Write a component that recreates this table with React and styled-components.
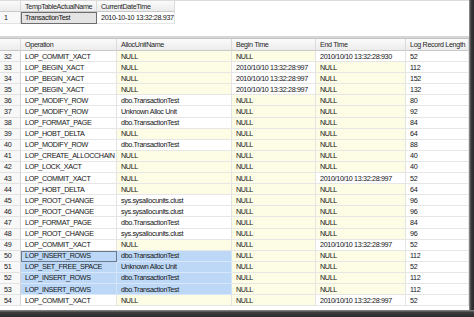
import React from "react";
import styled, { createGlobalStyle, css } from "styled-components";

const Global = createGlobalStyle`
  body {
    margin: 0;
    background: #fff;
    font-family: "Liberation Sans", Arial, sans-serif;
  }
`;

const Frame = styled.div`
  width: 474px;
  height: 317px;
  display: grid;
  grid-template-columns: 469px 5px;
  grid-template-rows: 310px 7px;
  overflow: hidden;
  background: #fff;
`;

const Content = styled.div`
  display: flex;
  flex-direction: column;
  overflow: hidden;
  background: #fff;
`;

const RightShadow = styled.div`
  background: linear-gradient(to right, #9a9a9a, #3a3a3a 40%, #2a2a2a);
`;

const BottomShadow = styled.div`
  grid-column: 1 / 3;
  background: linear-gradient(to bottom, #8c8c8c, #3c3c3c 35%, #2b2b2b);
`;

const TopPane = styled.div`
  height: 36px;
  border-top: 1px solid #dcdcdc;
  box-sizing: border-box;
`;

const Splitter = styled.div`
  height: 3px;
  background: #d6d6d6;
  border-bottom: 1px solid #c4c4c4;
  box-sizing: border-box;
`;

const Row = styled.div`
  display: grid;
  grid-template-columns: ${({ $cols }) => $cols};
  height: ${({ $h }) => $h};
`;

const cellText = css`
  font-size: 7.2px;
  letter-spacing: -0.35px;
  color: #141414;
  white-space: nowrap;
  overflow: hidden;
  box-sizing: border-box;
  display: flex;
  align-items: center;
  padding-left: 4px;
`;

const Head = styled.div`
  ${cellText}
  background: linear-gradient(#fbfbfb, #ececec);
  border-right: 1px solid #dadada;
  border-bottom: 1px solid #c9c9c9;
  color: #262626;
`;

const Num = styled.div`
  ${cellText}
  background: #f8f8f8;
  border-right: 1px solid #d4d4d4;
  border-bottom: 1px solid #e2e2e2;
`;

const Cell = styled.div`
  ${cellText}
  background: ${({ $null }) => ($null ? "#fdfce5" : "#fff")};
  border-right: 1px solid #e4e4e4;
  border-bottom: 1px solid #e6e6e6;

  ${({ $sel }) =>
    $sel &&
    css`
      background: #bcd8f6;
      border-right-color: #d2e4f8;
      border-bottom-color: #d8e8fa;
    `}

  ${({ $focus }) =>
    $focus &&
    css`
      outline: 1px solid #6a7a8c;
      outline-offset: -1px;
    `}

  ${({ $picked }) =>
    $picked &&
    css`
      background: #e4e4e4;
      outline: 1px solid #6d6d6d;
      outline-offset: -1px;
    `}
`;

const TOP_COLS = "21px 76px 78px";
const COLS = "21px 96px 115px 84px 90px 63px";

const ts = "2010/10/10 13:32:28:997";

const rows = [
  [32, "LOP_COMMIT_XACT", null, null, "2010/10/10 13:32:28:930", "52"],
  [33, "LOP_BEGIN_XACT", null, ts, null, "112"],
  [34, "LOP_BEGIN_XACT", null, ts, null, "152"],
  [35, "LOP_BEGIN_XACT", null, ts, null, "132"],
  [36, "LOP_MODIFY_ROW", "dbo.TransactionTest", null, null, "80"],
  [37, "LOP_MODIFY_ROW", "Unknown Alloc Unit", null, null, "92"],
  [38, "LOP_FORMAT_PAGE", "dbo.TransactionTest", null, null, "84"],
  [39, "LOP_HOBT_DELTA", null, null, null, "64"],
  [40, "LOP_MODIFY_ROW", "dbo.TransactionTest", null, null, "88"],
  [41, "LOP_CREATE_ALLOCCHAIN", null, null, null, "40"],
  [42, "LOP_LOCK_XACT", null, null, null, "40"],
  [43, "LOP_COMMIT_XACT", null, null, ts, "52"],
  [44, "LOP_HOBT_DELTA", null, null, null, "64"],
  [45, "LOP_ROOT_CHANGE", "sys.sysallocunits.clust", null, null, "96"],
  [46, "LOP_ROOT_CHANGE", "sys.sysallocunits.clust", null, null, "96"],
  [47, "LOP_FORMAT_PAGE", "dbo.TransactionTest", null, null, "84"],
  [48, "LOP_ROOT_CHANGE", "sys.sysallocunits.clust", null, null, "96"],
  [49, "LOP_COMMIT_XACT", null, null, ts, "52"],
  [50, "LOP_INSERT_ROWS", "dbo.TransactionTest", null, null, "112"],
  [51, "LOP_SET_FREE_SPACE", "Unknown Alloc Unit", null, null, "52"],
  [52, "LOP_INSERT_ROWS", "dbo.TransactionTest", null, null, "112"],
  [53, "LOP_INSERT_ROWS", "dbo.TransactionTest", null, null, "112"],
  [54, "LOP_COMMIT_XACT", null, null, ts, "52"],
];

const headers = [
  "",
  "Operation",
  "AllocUnitName",
  "Begin Time",
  "End Time",
  "Log Record Length",
];

const isSelected = (n, col) => n >= 50 && n <= 53 && (col === 1 || col === 2);

export default function App() {
  return (
    <>
      <Global />
      <Frame>
        <Content>
          <TopPane>
            <Row $cols={TOP_COLS} $h="11px">
              <Head />
              <Head>TempTableActualName</Head>
              <Head>CurrentDateTime</Head>
            </Row>
            <Row $cols={TOP_COLS} $h="12px">
              <Num>1</Num>
              <Cell $picked>TransactionTest</Cell>
              <Cell>2010-10-10 13:32:28.937</Cell>
            </Row>
          </TopPane>
          <Splitter />
          <Row $cols={COLS} $h="12px">
            {headers.map((h, i) => (
              <Head key={i}>{h}</Head>
            ))}
          </Row>
          {rows.map(([n, ...vals]) => (
            <Row key={n} $cols={COLS} $h="11.1px">
              <Num>{n}</Num>
              {vals.map((v, i) => (
                <Cell
                  key={i}
                  $null={v === null}
                  $sel={isSelected(n, i + 1)}
                  $focus={n === 50 && i === 0}
                >
                  {v === null ? "NULL" : v}
                </Cell>
              ))}
            </Row>
          ))}
        </Content>
        <RightShadow />
        <BottomShadow />
      </Frame>
    </>
  );
}
